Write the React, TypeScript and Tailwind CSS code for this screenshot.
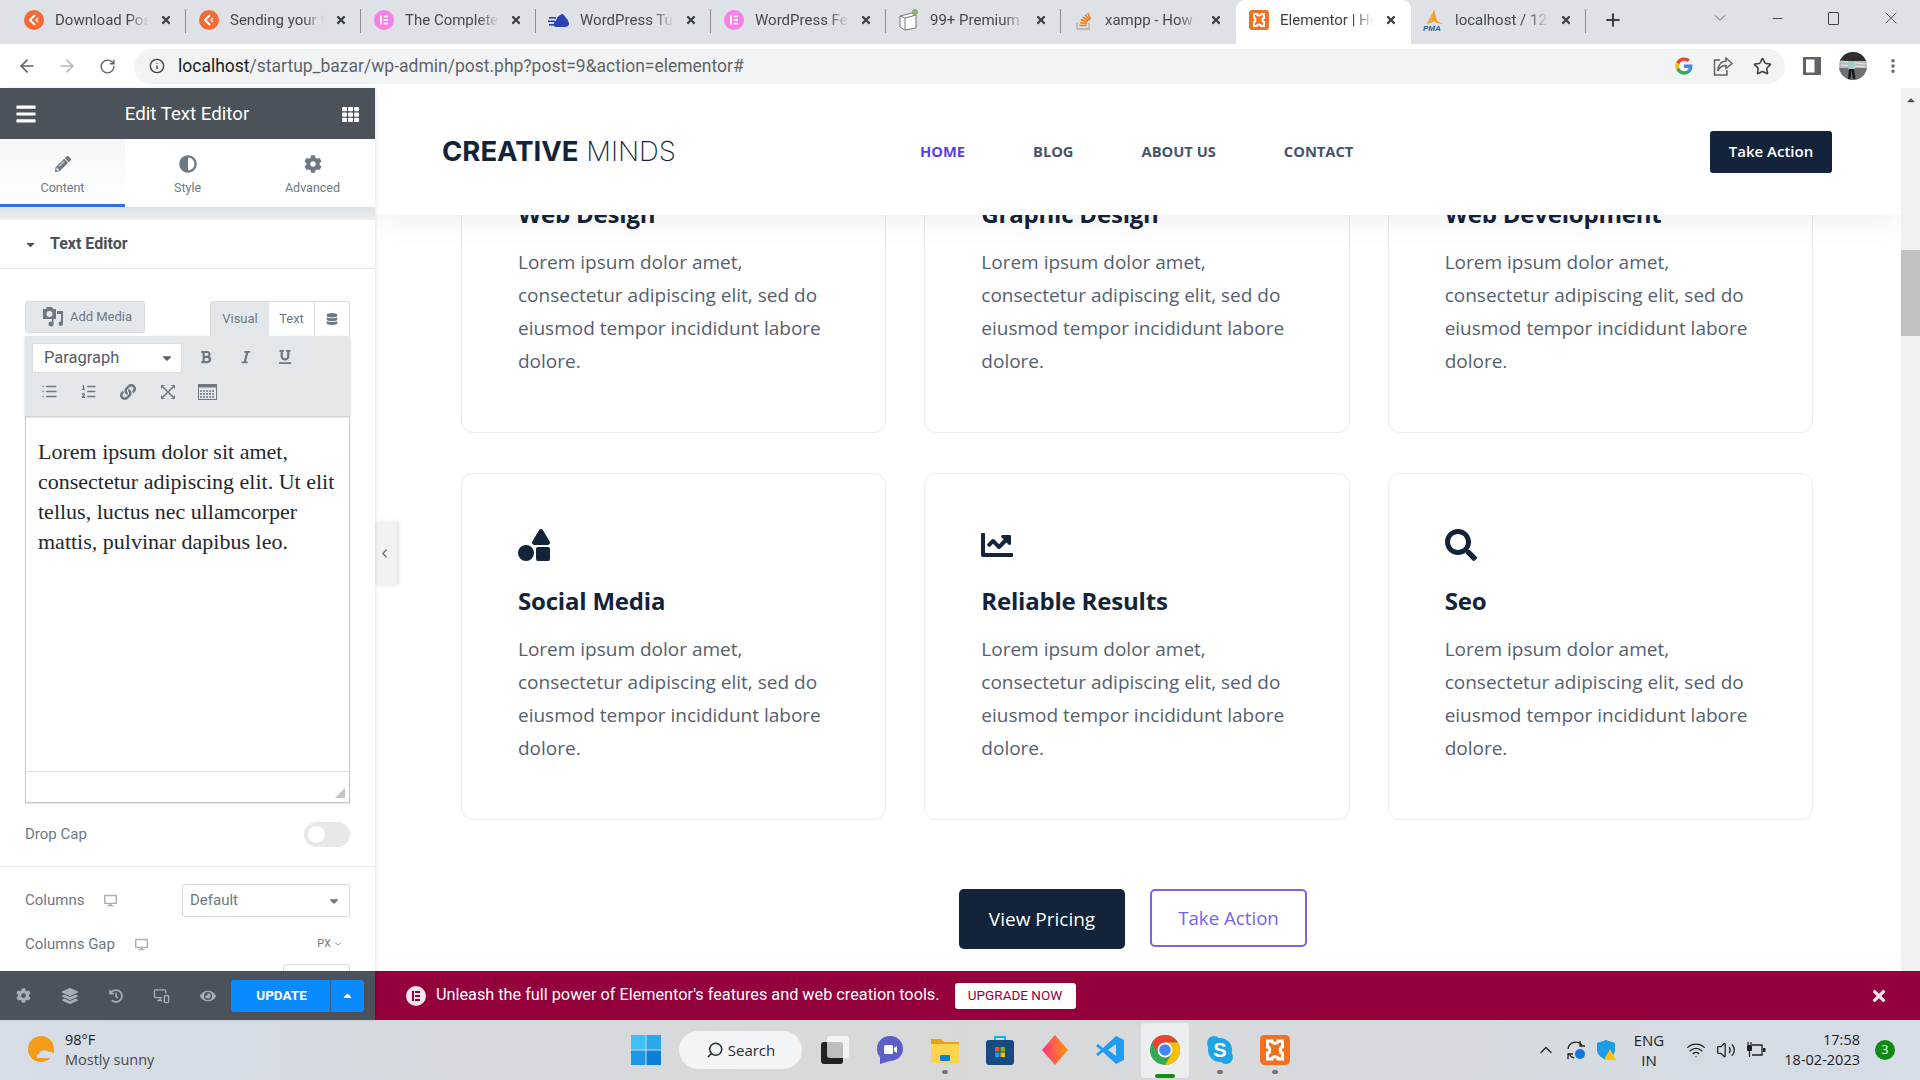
import React from 'react';
import {
  FaAdjust, FaBars, FaBold, FaCaretDown, FaCaretUp, FaChartLine, FaCog, FaDatabase, FaDesktop, FaEye,
  FaHistory, FaItalic, FaLayerGroup, FaLink, FaPencilAlt, FaSearch, FaShapes, FaTh, FaTimes, FaUnderline,
} from 'react-icons/fa';
import {
  ArrowLeft, ArrowRight, ChevronDown, ChevronLeft, ChevronUp, Info, List, ListOrdered, Minus, MonitorSmartphone,
  MoreVertical, Plus, RotateCw, Search, Star, Volume2, Wifi, X,
} from 'lucide-react';

const sans = 'font-["Roboto",sans-serif]';
const body = 'font-["Open_Sans",sans-serif]';

const OrangeIcon = () => (
  <svg width="20" height="20" viewBox="0 0 20 20">
    <circle cx="10" cy="10" r="10" fill="#f46a35" />
    <path d="M11 5 L6 10 L11 15" fill="none" stroke="#fff" strokeWidth="2" />
    <path d="M14 8 L12 10 L14 12" fill="none" stroke="#fff" strokeWidth="1.5" />
  </svg>
);

const ElementorPink = () => (
  <svg width="20" height="20" viewBox="0 0 20 20">
    <circle cx="10" cy="10" r="10" fill="#f77fe8" />
    <rect x="6" y="5.5" width="1.8" height="9" fill="#fff" />
    <rect x="9.5" y="5.5" width="4.5" height="1.8" fill="#fff" />
    <rect x="9.5" y="9.1" width="4.5" height="1.8" fill="#fff" />
    <rect x="9.5" y="12.7" width="4.5" height="1.8" fill="#fff" />
  </svg>
);

const WpTutIcon = () => (
  <svg width="22" height="16" viewBox="0 0 22 16">
    <path d="M8 15 C5 15 5 10 8 9 C9 4 13 2 15 2 C17 5 21 8 21 12 C21 14 19 15 17 15 Z" fill="#2f3fb5" />
    <rect x="1" y="5" width="7" height="1.6" fill="#2f3fb5" />
    <rect x="0" y="8.5" width="7" height="1.6" fill="#2f3fb5" />
    <rect x="1" y="12" width="6" height="1.6" fill="#2f3fb5" />
  </svg>
);

const BoxIcon = () => (
  <svg width="22" height="22" viewBox="0 0 22 22">
    <path d="M2 7 L14 4 L18 6 L18 19 L7 21 L2 18 Z" fill="#fff" stroke="#777" strokeWidth="1" />
    <path d="M2 7 L7 9 L18 6 M7 9 L7 21" fill="none" stroke="#777" strokeWidth="1" />
    <circle cx="17" cy="3" r="3" fill="#8ab56a" />
  </svg>
);

const StackIcon = () => (
  <svg width="18" height="20" viewBox="0 0 18 20">
    <path d="M2 13 V19 H14 V13" fill="none" stroke="#bcbbbb" strokeWidth="1.8" />
    <path d="M4.5 15.5 H11.5 M4.8 12.5 L11.8 13.6 M5.8 9.6 L12.4 12 M7.6 7 L13.4 10.8 M10 4.6 L14.6 10 M12.8 3 L15.4 9.4" stroke="#f48024" strokeWidth="1.7" />
  </svg>
);

const XamppIcon = ({ size = 20 }: { size?: number }) => (
  <svg width={size} height={size} viewBox="0 0 20 20">
    <rect width="20" height="20" rx="3" fill="#f0711f" />
    <path d="M5 4 H8 C8 6 12 6 12 4 H15 V8 C13 8 13 12 15 12 V16 H12 C12 14 8 14 8 16 H5 V12 C7 12 7 8 5 8 Z" fill="none" stroke="#fff" strokeWidth="2" />
  </svg>
);

const PmaIcon = () => (
  <svg width="22" height="22" viewBox="0 0 22 22">
    <path d="M11 0 L8 12 L3 15 L8 14 L11 12 L14 14 L20 15 L14 12 Z" fill="#f39a28" />
    <path d="M10.5 2 L4 14 L9 12 Z" fill="#e8b04a" />
    <text x="0" y="21.5" fontSize="8" fontWeight="800" fontStyle="italic" fill="#345b95" fontFamily="Liberation Sans">PMA</text>
  </svg>
);

const GoogleIcon = () => (
  <svg width="18" height="18" viewBox="0 0 48 48">
    <path fill="#ea4335" d="M24 10c3.5 0 6.6 1.2 9 3.5l6.7-6.7C35.6 3 30.2 1 24 1 15 1 7.300 6.200 3.500 13.700l7.800 6C13.200 14.100 18.100 10 24 10z" />
    <path fill="#4285f4" d="M46.500 24.500c0-1.600-.1-3.100-.4-4.500H24v9h12.700c-.6 2.900-2.200 5.400-4.700 7l7.300 5.700c4.300-4 7.200-9.900 7.200-17.200z" />
    <path fill="#fbbc05" d="M11.300 28.700C10.800 27.200 10.500 25.600 10.500 24s.3-3.200.8-4.700l-7.800-6C1.900 16.500 1 20.100 1 24s.9 7.500 2.500 10.700l7.800-6z" />
    <path fill="#34a853" d="M24 47c6.200 0 11.400-2 15.300-5.500L32 35.800c-2 1.400-4.700 2.200-8 2.200-5.900 0-10.800-4-12.600-9.300l-7.800 6C7.300 41.800 15 47 24 47z" />
  </svg>
);

const ShareIcon = () => (
  <svg width="20" height="19" viewBox="0 0 20 19" fill="none" stroke="#5f6368" strokeWidth="1.500">
    <path d="M7 3 H1.500 V18 H14 V13" />
    <path d="M13 1 L19 6.500 L13 11.500 V8.500 C9 8.500 6.500 10 5 14 C5 8 8 4.500 13 4 Z" />
  </svg>
);

const SidePanelIcon = () => (
  <svg width="18" height="18" viewBox="0 0 18 18">
    <rect width="18" height="18" fill="#5f6368" />
    <rect x="3" y="2.500" width="8.500" height="13" fill="#fff" />
  </svg>
);

const Avatar = () => (
  <svg width="28" height="28" viewBox="0 0 28 28">
    <defs>
      <clipPath id="avatarClip"><circle cx="14" cy="14" r="14" /></clipPath>
    </defs>
    <g clipPath="url(#avatarClip)">
      <rect width="28" height="28" fill="#b9bdbd" />
      <rect width="28" height="9" fill="#2d2f30" />
      <rect y="16" width="28" height="12" fill="#6d7070" />
      <path d="M2 9 L26 12 M2 13 L26 15" stroke="#e8e8e8" strokeWidth="1" />
      <circle cx="12" cy="6" r="2.500" fill="#3a2a22" />
      <path d="M9 9 H16 L16 17 H9 Z" fill="#a9c9c9" />
      <path d="M10 17 L9 27 H11.500 L12.500 18 L14 27 H16.500 L15 17 Z" fill="#1a1a1a" />
    </g>
  </svg>
);

const ChromeIcon = () => (
  <svg width="30" height="30" viewBox="0 0 30 30">
    <circle cx="15" cy="15" r="15" fill="#34a853" />
    <path d="M15 0 A15 15 0 0 1 28 7.500 L15 7.500 L8.500 19 L2 7.500 A15 15 0 0 1 15 0 Z" fill="#ea4335" />
    <path d="M28 7.500 A15 15 0 0 1 15 30 L21.500 19 L15 7.500 Z" fill="#fbbc05" />
    <circle cx="15" cy="15" r="7.500" fill="#fff" />
    <circle cx="15" cy="15" r="5.800" fill="#4285f4" />
  </svg>
);

const tabs = [
  { title: 'Download Post', icon: <OrangeIcon /> },
  { title: 'Sending your f', icon: <OrangeIcon /> },
  { title: 'The Complete', icon: <ElementorPink /> },
  { title: 'WordPress Tut', icon: <WpTutIcon /> },
  { title: 'WordPress Fea', icon: <ElementorPink /> },
  { title: '99+ Premium', icon: <BoxIcon /> },
  { title: 'xampp - How', icon: <StackIcon /> },
  { title: 'Elementor | Ho', icon: <XamppIcon />, active: true },
  { title: 'localhost / 127', icon: <PmaIcon /> },
];

const TabBar = () => (
  <div className={`flex h-[44px] items-end bg-[#dee1e6] pl-[11px] ${sans}`}>
    {tabs.map((tab, i) => (
      <div
        key={i}
        className={`relative flex h-[44px] w-[175px] shrink-0 items-center pl-[12px] pr-[14px] pb-[4px] text-[15px] ${tab.active ? 'rounded-t-[9px] bg-white text-[#3c4043]' : 'text-[#45494e]'}`}
      >
        <span className="flex w-[22px] shrink-0 justify-center">{tab.icon}</span>
        <span className="ml-[10px] w-[94px] overflow-hidden whitespace-nowrap [mask-image:linear-gradient(to_right,black_78%,transparent)]">{tab.title}</span>
        <FaTimes className="ml-auto shrink-0 text-[#3c4043]" size={12} />
        {!tab.active && i !== 6 && <span className="absolute right-0 top-[9px] h-[24px] w-px bg-[#8c9095]" />}
      </div>
    ))}
    <div className="flex h-[44px] w-[54px] items-center justify-center pb-[4px]">
      <Plus size={20} strokeWidth={2.5} className="text-[#3c4043]" />
    </div>
    <div className="ml-auto flex h-[44px] items-center pb-[8px] text-[#3c4043]">
      <ChevronDown size={18} strokeWidth={1} className="mr-[41px]" />
      <Minus size={15} strokeWidth={1.5} className="mr-[43px]" />
      <span className="mr-[42px] h-[13px] w-[11px] rounded-[1px] border border-[#3c4043]" />
      <X size={20} strokeWidth={1} className="mr-[19px]" />
    </div>
  </div>
);

const AddressBar = () => (
  <div className="flex h-[44px] items-center bg-white text-[#5f6368]">
    <div className="flex w-[134px] shrink-0 items-center">
      <ArrowLeft size={20} strokeWidth={2} className="ml-[17px]" />
      <ArrowRight size={20} strokeWidth={2} className="ml-[20px] text-[#b4b7ba]" />
      <RotateCw size={17} strokeWidth={2} className="ml-[22px]" />
    </div>
    <div className={`flex h-[35px] w-[1651px] shrink-0 items-center rounded-full bg-[#f1f3f4] pl-[15px] text-[17.500px] ${sans}`}>
      <Info size={16} strokeWidth={2} className="text-[#3c4043]" />
      <span className="ml-[13px] text-[#202124]">localhost</span>
      <span className="text-[#5f6368]">/startup_bazar/wp-admin/post.php?post=9&amp;action=elementor#</span>
      <span className="ml-auto mr-[13px] flex items-center">
        <GoogleIcon />
        <span className="ml-[20px] flex"><ShareIcon /></span>
        <Star size={19} strokeWidth={2} className="ml-[20px] text-[#3c4043]" />
      </span>
    </div>
    <span className="ml-[18px] flex"><SidePanelIcon /></span>
    <span className="ml-[18px] flex"><Avatar /></span>
    <MoreVertical size={18} strokeWidth={2.5} className="ml-[17px]" />
  </div>
);

const AddMediaIcon = () => (
  <svg width="22" height="22" viewBox="0 0 22 22" fill="#6d7882">
    <path d="M1 3 H4 L5 1 H10 L11 3 H14 V13 H1 Z M7.500 5 A3 3 0 1 0 7.500 11 A3 3 0 1 0 7.500 5 Z" fillRule="evenodd" />
    <path d="M15 5 H21 V17.500 A2.200 2.200 0 1 1 19 15.500 V8 H15 Z" />
    <circle cx="9" cy="18" r="2.500" />
    <rect x="10" y="13" width="1.500" height="5" />
  </svg>
);

const ExpandIcon = () => (
  <svg width="16" height="16" viewBox="0 0 16 16" stroke="#6d7882" strokeWidth="1.5" fill="#6d7882">
    <path d="M3 3 L13 13 M13 3 L3 13" />
    <path d="M1 1 H5 L1 5 Z M15 1 V5 L11 1 Z M1 15 V11 L5 15 Z M15 15 H11 L15 11 Z" strokeWidth="0" />
  </svg>
);

const KitchenSinkIcon = () => (
  <svg width="19" height="16" viewBox="0 0 19 16">
    <rect x="0.500" y="0.500" width="18" height="15" fill="none" stroke="#6d7882" />
    <rect x="0.500" y="0.500" width="18" height="3" fill="#6d7882" />
    <path d="M2 7 H17 M2 10 H17 M2 13 H17" stroke="#6d7882" strokeWidth="1.5" strokeDasharray="2 1" />
  </svg>
);

const Sidebar = () => (
  <aside className={`relative z-10 flex w-[375px] shrink-0 flex-col bg-white shadow-[1px_0_3px_rgba(0,0,0,0.1)] ${sans}`}>
    <div className="flex h-[51px] shrink-0 items-center justify-between bg-[#4b5259] pl-[15px] pr-[16px] pt-[1px] text-white">
      <span className="flex w-[22px]"><FaBars size={22} /></span>
      <span className="text-[18.700px]">Edit Text Editor</span>
      <span className="flex w-[22px] justify-end"><FaTh size={17} /></span>
    </div>
    <div className="flex h-[68px] shrink-0 bg-white text-[12.500px] text-[#6d7882]">
      {[
        { label: 'Content', icon: <FaPencilAlt size={16} />, active: true },
        { label: 'Style', icon: <FaAdjust size={18} /> },
        { label: 'Advanced', icon: <FaCog size={18} /> },
      ].map((t) => (
        <div
          key={t.label}
          className={`flex w-[125px] flex-col items-center pt-[16px] ${t.active ? 'border-b-[3px] border-[#2f6fe8] bg-gradient-to-b from-[#f4f6f8] to-white' : ''}`}
        >
          <span className="flex h-[18px] items-center">{t.icon}</span>
          <span className="mt-[6px] leading-[18px]">{t.label}</span>
        </div>
      ))}
    </div>
    <div className="h-[13px] shrink-0 bg-gradient-to-b from-[#dfe2e5] to-[#eceef0]" />
    <div className="min-h-0 flex-1 overflow-hidden">
      <div className="flex h-[49px] items-center border-b border-[#e6e9ec] pl-[24px] text-[#495157]">
        <FaCaretDown size={13} />
        <span className="ml-[13px] text-[16px] font-bold">Text Editor</span>
      </div>
      <div className="px-[25px] pt-[32px]">
        <div className="flex items-start justify-between">
          <div className="flex h-[32px] w-[120px] items-center justify-center rounded-[3px] border border-[#d5dadf] bg-[#e4e7ea] pl-[4px] text-[13px] text-[#6d7882]">
            <AddMediaIcon />
            <span className="ml-[6px]">Add Media</span>
          </div>
          <div className="flex h-[35px] rounded-t-[3px] border border-b-0 border-[#d5dadf] text-[13px] text-[#6d7882]">
            <span className="flex w-[58px] items-center justify-center bg-[#e4e7ea]">Visual</span>
            <span className="flex w-[46px] items-center justify-center border-r border-[#d5dadf]">Text</span>
            <span className="flex w-[34px] items-center justify-center"><FaDatabase size={12} /></span>
          </div>
        </div>
        <div className="h-[80px] bg-[#e4e7ea] px-[7px] pt-[7px] text-[#6d7882] shadow-[0_1px_2px_rgba(0,0,0,0.25)]">
          <div className="flex h-[30px] items-center">
            <div className="flex h-[30px] w-[150px] items-center border border-[#dcdfe3] bg-white pl-[11px] pr-[7px] text-[16.500px] text-[#555d66]">
              Paragraph
              <FaCaretDown size={14} className="ml-auto text-[#555d66]" />
            </div>
            <FaBold size={14} className="mb-[3px] ml-[17px]" />
            <FaItalic size={14} className="mb-[3px] ml-[26px]" />
            <FaUnderline size={14} className="mb-[3px] ml-[25px]" />
          </div>
          <div className="mt-[10px] flex items-center pl-[9px]">
            <List size={17} />
            <ListOrdered size={17} className="ml-[22px]" />
            <FaLink size={16} className="ml-[23px]" />
            <span className="ml-[24px] flex"><ExpandIcon /></span>
            <span className="ml-[22px] flex"><KitchenSinkIcon /></span>
          </div>
        </div>
        <div className="relative h-[387px] border-x border-b border-[#c4c8cc] shadow-[0_1px_1px_rgba(0,0,0,0.1)]">
          <p className='pl-[12px] pt-[21px] font-["Liberation_Serif",serif] text-[22px] leading-[30px] text-[#23282d]'>
            Lorem ipsum dolor sit amet, consectetur adipiscing elit. Ut elit tellus, luctus nec ullamcorper mattis, pulvinar dapibus leo.
          </p>
          <div className="absolute inset-x-0 bottom-0 h-[31px] border-t border-[#e0e2e5]" />
          <svg className="absolute bottom-[3px] right-[3px]" width="12" height="12" viewBox="0 0 12 12">
            <path d="M11 1 L1 11 H11 Z" fill="#9aa0a6" opacity="0.6" />
          </svg>
        </div>
        <div className="mt-[19px] flex h-[25px] items-center justify-between text-[15px] text-[#6d7882]">
          <span>Drop Cap</span>
          <span className="flex h-[25px] w-[46px] items-center rounded-full bg-[#e6e8ea] pl-[4px]">
            <span className="h-[17px] w-[17px] rounded-full bg-white" />
          </span>
        </div>
      </div>
      <div className="mt-[19px] border-t border-[#e6e9ec] px-[25px] pt-[17px] text-[15px] text-[#6d7882]">
        <div className="flex h-[33px] items-center">
          <span>Columns</span>
          <FaDesktop size={13} className="ml-[20px] text-[#a4afb7]" />
          <div className="ml-auto flex h-[33px] w-[168px] items-center rounded-[3px] border border-[#d5dadf] pl-[7px] pr-[8px]">
            Default
            <FaCaretDown size={14} className="ml-auto" />
          </div>
        </div>
        <div className="mt-[15px] flex h-[24px] items-center">
          <span>Columns Gap</span>
          <FaDesktop size={13} className="ml-[20px] text-[#a4afb7]" />
          <span className="ml-auto mr-[7px] flex items-center text-[11px]">PX<ChevronDown size={10} className="ml-[2px]" /></span>
        </div>
        <div className="ml-auto mt-[8px] h-[33px] w-[67px] rounded-[3px] border border-[#d5dadf]" />
      </div>
    </div>
    <div className="flex h-[49px] shrink-0 items-center bg-[#4b5259] text-[#a4afb7]">
      <FaCog size={15} className="ml-[16px]" />
      <FaLayerGroup size={16} className="ml-[31px]" />
      <FaHistory size={14} className="ml-[31px]" />
      <MonitorSmartphone size={17} className="ml-[30px]" />
      <FaEye size={16} className="ml-[30px]" />
      <div className="ml-[15px] flex h-[32px] w-[133px] rounded-[3px] bg-[#0a8aff] text-white">
        <span className="flex w-[100px] items-center justify-center border-r border-[#3f5f80] pl-[2px] text-[13.500px] font-bold">UPDATE</span>
        <span className="flex flex-1 items-center justify-center"><FaCaretUp size={13} /></span>
      </div>
    </div>
  </aside>
);

const services = [
  { title: 'Web Design' },
  { title: 'Graphic Design' },
  { title: 'Web Development' },
  { title: 'Social Media', icon: <FaShapes size={32} /> },
  { title: 'Reliable Results', icon: <FaChartLine size={32} /> },
  { title: 'Seo', icon: <FaSearch size={32} /> },
];

const ServiceCard = ({ title, icon }: { title: string; icon?: React.ReactNode }) => (
  <div className="h-[347px] rounded-[12px] border border-[#e8eaf0] bg-white pl-[56px] pr-[50px] pt-[55px]">
    <div className="h-[32px] text-[#12233a]">{icon}</div>
    <h3 className="mt-[23px] text-[24px] font-bold leading-[33px] tracking-[-0.2px] text-[#12233a]">{title}</h3>
    <p className="mt-[16px] text-[19px] leading-[33px] text-[#56606e]">
      Lorem ipsum dolor amet, consectetur adipiscing elit, sed do eiusmod tempor incididunt labore dolore.
    </p>
  </div>
);

const Preview = () => (
  <div className={`relative flex min-h-0 flex-1 overflow-hidden bg-white ${body}`}>
    <div className="relative min-w-0 flex-1 overflow-hidden">
      <div className="-mt-[2px] grid grid-cols-3 gap-x-[38px] gap-y-[40px] pl-[86px] pr-[88px]">
        {services.map((s) => (
          <ServiceCard key={s.title} title={s.title} icon={s.icon} />
        ))}
      </div>
      <div className="mt-[69px] flex justify-center gap-[25px] pr-[10px]">
        <button className="h-[60px] w-[166px] rounded-[5px] bg-[#12233a] text-[19px] font-medium text-white">View Pricing</button>
        <button className="h-[58px] w-[157px] rounded-[5px] border-2 border-[#7b61f0] text-[18.700px] text-[#7b61f0]">Take Action</button>
      </div>
      <header className="absolute inset-x-0 top-0 flex h-[127px] items-center bg-white pl-[67px] pr-[69px] shadow-[0_4px_30px_rgba(0,0,0,0.07)]">
        <span className='w-[234px] whitespace-nowrap font-["Inter",sans-serif] text-[27.500px] text-[#12233a]'>
          <span className="font-bold">CREATIVE</span> <span className="font-extralight">MINDS</span>
        </span>
        <nav className="ml-[244px] flex gap-[68px] text-[14.700px] font-bold text-[#47546a]">
          <span className="text-[#5b3fe0]">HOME</span>
          <span>BLOG</span>
          <span>ABOUT US</span>
          <span>CONTACT</span>
        </nav>
        <button className="ml-auto h-[42px] w-[122px] rounded-[3px] bg-[#12233a] text-[15px] font-semibold text-white">Take Action</button>
      </header>
      <div className="absolute left-0 top-[434px] flex h-[63px] w-[22px] items-center justify-center bg-[#f1f2f3] pr-[3px] text-[#6d7882] shadow-[2px_0_4px_rgba(0,0,0,0.12)]">
        <ChevronLeft size={13} strokeWidth={3} />
      </div>
    </div>
    <div className="flex w-[19px] shrink-0 flex-col items-center bg-[#f1f1f1]">
      <FaCaretUp size={12} className="mt-[6px] text-[#505050]" />
      <div className="mt-[144px] h-[86px] w-full bg-[#c1c1c1]" />
    </div>
  </div>
);

const Banner = () => (
  <div className={`flex h-[49px] shrink-0 items-center bg-[#93003c] pl-[31px] text-white ${sans}`}>
    <span className="flex h-[20px] w-[20px] items-center justify-center rounded-full bg-[#f6e6ed]">
      <span className="flex items-center gap-[1.500px]">
        <span className="h-[10px] w-[2px] bg-[#93003c]" />
        <span className="flex flex-col gap-[2px]">
          <span className="h-[2px] w-[5px] bg-[#93003c]" />
          <span className="h-[2px] w-[5px] bg-[#93003c]" />
          <span className="h-[2px] w-[5px] bg-[#93003c]" />
        </span>
      </span>
    </span>
    <span className="ml-[10px] text-[16.250px]">Unleash the full power of Elementor's features and web creation tools.</span>
    <span className="ml-[15px] flex h-[26px] w-[121px] items-center justify-center rounded-[3px] bg-white text-[13.500px] text-[#93003c]">UPGRADE NOW</span>
    <FaTimes size={18} className="ml-auto mr-[32px] text-[#f5e4eb]" />
  </div>
);

const TaskIcon = ({ children, dot }: { children: React.ReactNode; dot?: boolean }) => (
  <div className="relative flex h-[60px] w-[55px] items-center justify-center">
    {children}
    {dot && <span className="absolute bottom-[6px] h-[4px] w-[6px] rounded-full bg-[#6f7478]" />}
  </div>
);

const Taskbar = () => (
  <div className={`flex h-[60px] shrink-0 items-center bg-gradient-to-r from-[#d5dde6] via-[#d8d8d8] to-[#d5dde6] ${sans}`}>
    <div className='flex w-[623px] shrink-0 items-center pl-[28px] font-["Open_Sans",sans-serif] text-[14.500px] leading-[20px]'>
      <svg width="28" height="28" viewBox="0 0 28 28">
        <circle cx="13" cy="13" r="13" fill="#f59c1a" />
        <path d="M11 22 C8 22 8 18 11 18 C12 14 18 13 20 16 C24 15 27 18 26 22 Z" fill="#cfe0f5" />
      </svg>
      <div className="ml-[9px]">
        <div className="text-[#1a1a1a]">98°F</div>
        <div className="text-[#4a4a4a]">Mostly sunny</div>
      </div>
    </div>
    <div className="flex w-[46px] justify-center">
      <svg width="30" height="30" viewBox="0 0 30 30">
        <rect width="14.500" height="14.500" fill="#3fc0f5" />
        <rect x="15.500" width="14.500" height="14.500" fill="#2aa8ea" />
        <rect y="15.500" width="14.500" height="14.500" fill="#1e98e3" />
        <rect x="15.500" y="15.500" width="14.500" height="14.500" fill="#0c7fd6" />
      </svg>
    </div>
    <div className='ml-[10px] flex h-[38px] w-[123px] items-center justify-center rounded-full bg-[#f2f4f7] font-["Open_Sans",sans-serif] text-[15px] text-[#2b2b2b]'>
      <Search size={18} className="-scale-x-100" />
      <span className="ml-[4px]">Search</span>
    </div>
    <div className="ml-[5px] flex">
      <TaskIcon>
        <span className="relative h-[28px] w-[28px]">
          <span className="absolute bottom-0 left-0 h-[22px] w-[22px] rounded-[3px] bg-[#222]" />
          <span className="absolute right-0 top-0 h-[22px] w-[22px] rounded-[3px] bg-white/70" />
        </span>
      </TaskIcon>
      <TaskIcon>
        <svg width="28" height="30" viewBox="0 0 28 30">
          <path d="M14 1 C22 1 27 7 27 14 C27 21 21 26 14 26 L4 29 L4 22 C2 20 1 17 1 14 C1 7 6 1 14 1 Z" fill="#5b5fc7" />
          <rect x="8" y="10" width="9" height="9" rx="1.500" fill="#fff" />
          <path d="M18 13 L21 11 V18 L18 16 Z" fill="#fff" />
        </svg>
      </TaskIcon>
      <TaskIcon dot>
        <svg width="30" height="28" viewBox="0 0 30 28">
          <path d="M1 3 H11 L14 6 H29 V27 H1 Z" fill="#e9a20f" />
          <rect x="1" y="8" width="28" height="19" fill="#fcd34d" />
          <rect x="10" y="19" width="10" height="6" rx="1" fill="#0c7fd6" />
        </svg>
      </TaskIcon>
      <TaskIcon>
        <svg width="28" height="30" viewBox="0 0 28 30">
          <path d="M9 6 V2 H19 V6" fill="none" stroke="#2aa8ea" strokeWidth="2" />
          <rect y="5" width="28" height="25" rx="3" fill="#174a82" />
          <rect x="9" y="12" width="4.500" height="4.500" fill="#f25022" />
          <rect x="14.500" y="12" width="4.500" height="4.500" fill="#7fba00" />
          <rect x="9" y="17.500" width="4.500" height="4.500" fill="#00a4ef" />
          <rect x="14.500" y="17.500" width="4.500" height="4.500" fill="#ffb900" />
        </svg>
      </TaskIcon>
      <TaskIcon>
        <svg width="30" height="30" viewBox="0 0 30 30">
          <defs>
            <linearGradient id="gem" x1="0" y1="0" x2="1" y2="0">
              <stop offset="0" stopColor="#ff2d8a" />
              <stop offset="1" stopColor="#ff9a00" />
            </linearGradient>
          </defs>
          <path d="M15 0 L28 15 L15 30 L2 15 Z" fill="url(#gem)" />
        </svg>
      </TaskIcon>
      <TaskIcon>
        <svg width="30" height="30" viewBox="0 0 30 30">
          <path d="M21 1 L29 5 V25 L21 29 L8 17 L3 21 L1 19 L6 15 L1 11 L3 9 L8 13 Z M21 9 L13 15 L21 21 Z" fill="#1f9cf0" fillRule="evenodd" />
        </svg>
      </TaskIcon>
      <div className="relative flex h-[60px] w-[55px] items-center justify-center">
        <div className="flex h-[55px] w-[48px] items-center justify-center rounded-[4px] bg-[#eceef0]">
          <ChromeIcon />
        </div>
        <span className="absolute bottom-[2px] h-[4px] w-[20px] rounded-full bg-[#129012]" />
      </div>
      <TaskIcon dot>
        <svg width="28" height="30" viewBox="0 0 28 30">
          <circle cx="14" cy="15" r="12" fill="#1fa4e8" />
          <circle cx="8" cy="8" r="7" fill="#1fa4e8" />
          <circle cx="20" cy="22" r="7" fill="#1fa4e8" />
          <text x="14" y="22" textAnchor="middle" fontSize="20" fontWeight="700" fill="#fff" fontFamily="Liberation Sans">S</text>
        </svg>
      </TaskIcon>
      <TaskIcon dot>
        <XamppIcon size={30} />
      </TaskIcon>
    </div>
    <div className='ml-auto flex items-center font-["Open_Sans",sans-serif] text-[15px] text-[#1f1f1f]'>
      <ChevronUp size={20} strokeWidth={1.5} />
      <svg className="ml-[10px]" width="20" height="20" viewBox="0 0 20 20">
        <path d="M2 9 A8 8 0 0 1 16 5 M14 1 V6 H19 M2 19 V14 H7 M3 14 A8 8 0 0 0 8 18" fill="none" stroke="#222" strokeWidth="1.300" />
        <circle cx="14" cy="14" r="5" fill="#1278dc" />
      </svg>
      <svg className="ml-[10px]" width="20" height="20" viewBox="0 0 20 20">
        <path d="M10 0 L19 3 V10 C19 15 14 18 10 20 C6 18 1 15 1 10 V3 Z" fill="#1d9be6" />
        <path d="M14 9 L20 20 H8 Z" fill="#ffc400" />
      </svg>
      <div className="ml-[15px] w-[36px] text-center leading-[20px]">ENG<br />IN</div>
      <Wifi size={20} className="ml-[19px]" strokeWidth={1.5} />
      <Volume2 size={20} className="ml-[10px]" strokeWidth={1.5} />
      <svg className="ml-[10px]" width="20" height="16" viewBox="0 0 20 16">
        <path d="M6 3 H16 V13 H6" fill="none" stroke="#222" strokeWidth="1.300" />
        <rect x="17" y="6" width="2.500" height="4" fill="#222" />
        <rect x="1" y="3" width="5" height="6" rx="1" fill="#222" />
        <path d="M3.500 9 V15 M2 0 V3 M5 0 V3" stroke="#222" strokeWidth="1.200" />
      </svg>
      <div className="ml-[15px] w-[79px] text-right text-[14.500px] leading-[20px]">17:58<br />18-02-2023</div>
      <span className="ml-[15px] mr-[25px] flex h-[20px] w-[20px] items-center justify-center rounded-full bg-[#108a10] text-[12px] text-white">3</span>
    </div>
  </div>
);

const App = () => {
  return (
    <div className="flex h-[1080px] w-[1920px] flex-col overflow-hidden">
      <TabBar />
      <AddressBar />
      <div className="flex h-[932px] min-h-0">
        <Sidebar />
        <div className="flex min-w-0 flex-1 flex-col">
          <Preview />
          <Banner />
        </div>
      </div>
      <Taskbar />
    </div>
  );
};

export default App;
